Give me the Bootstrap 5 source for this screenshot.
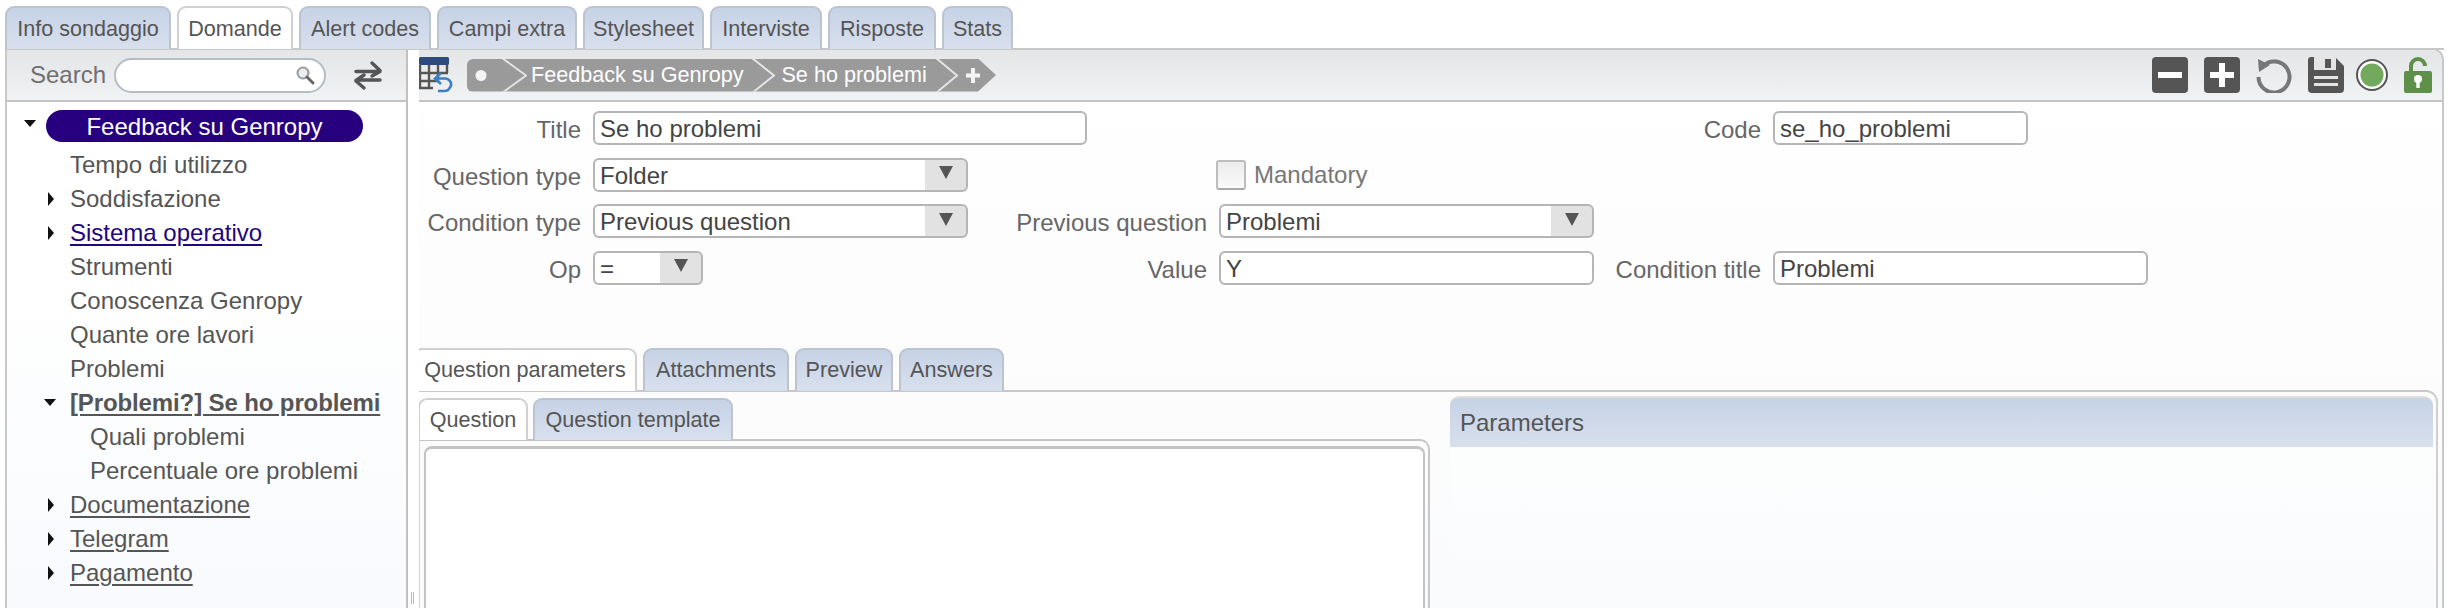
<!DOCTYPE html>
<html lang="it">
<head>
<meta charset="utf-8">
<title>Domande</title>
<link href="https://cdn.jsdelivr.net/npm/bootstrap@5.3.0/dist/css/bootstrap.min.css" rel="stylesheet">
<style>
html,body{height:608px;overflow:hidden;background:#fff;}
body{font-family:"Liberation Sans",Arial,sans-serif;font-size:24px;color:#555;line-height:34px;padding:6px 6px 0 5px;}
.gtabs{display:flex;gap:6px;align-items:flex-end;height:43px;position:relative;z-index:1;}
.gtabs.gsub{height:42px;gap:5px;}
.gtab{font-size:21.6px;line-height:1;padding:0;display:flex;align-items:center;justify-content:center;height:100%;border:2px solid #bcc4d0;border-bottom:0;border-radius:9px 9px 0 0;background:linear-gradient(#c6d2e6,#d8e0ed);color:#555;}
.gtab.on{background:#fff;border-color:#d0d0d0;color:#555;}
.tw-a{width:166px}.tw-b{width:116px}.tw-c{width:132px}.tw-d{width:140px}.tw-e{width:121px}.tw-f{width:112px}.tw-g{width:108px}.tw-h{width:71px}
.tw-i{width:224px}.tw-j{width:146px}.tw-k{width:98px}.tw-l{width:105px}.tw-m{width:110px}.tw-n{width:200px}
.shell{height:560px;display:flex;border-top:2px solid #c8c8c8;margin-top:-1px;}
.leftp{width:403px;flex:none;border-left:2px solid #c8c8c8;border-right:2px solid #c0c0c0;background:linear-gradient(#fff 40%,#f8fafd);}
.splitter{width:11px;flex:none;position:relative;background:#fff;}
.splitter i{position:absolute;left:3px;top:542px;width:3px;height:12px;border-left:1px solid #bbb;border-right:1px solid #bbb;}
.rightp{flex:1;min-width:0;display:flex;flex-direction:column;overflow:hidden;border-right:2px solid #c8c8c8;border-top-right-radius:12px;margin-top:-2px;border-top:2px solid #c8c8c8;background:linear-gradient(#fff,#fcfcfc 60%,#fafbfd);}
.lhead{height:52px;background:linear-gradient(#e3e5e7,#f1f2f3);border-bottom:2px solid #c4c4c4;display:flex;align-items:center;padding-left:23px;color:#707070;}
.searchbox{width:212px;height:35px;margin-left:8px;border:2px solid #b4bcc6;border-radius:18px;background:#fff;display:flex;align-items:center;justify-content:flex-end;padding-right:9px;}
.swapi{margin-left:27px;}
.gtree{list-style:none;margin:0;padding:8px 0 0 0;}
.gtree li{height:34px;line-height:34px;padding-left:63px;position:relative;white-space:nowrap;}
.gtree li.deep{padding-left:83px;}
.gtree li.sub{text-decoration:underline;text-underline-offset:3px;}
.gtree li.visited{color:#22057f;}
.gtree li.bold{font-weight:700;letter-spacing:-.12px;}
.gtree li.rootn{height:32px;line-height:34px;padding:0;margin-left:39px;margin-bottom:6px;width:317px;background:#26007f;color:#fff;border-radius:16px;text-align:center;}
.tarrow-r,.tarrow-d{position:absolute;width:0;height:0;}
.tarrow-r{left:41px;top:10px;border-left:6px solid #111;border-top:7px solid transparent;border-bottom:7px solid transparent;}
.tarrow-d{left:37px;top:13px;border-top:7px solid #111;border-left:6px solid transparent;border-right:6px solid transparent;}
.rootn .tarrow-d{left:-22px;top:10px;}
.rhead{height:52px;flex:none;background:linear-gradient(#e3e5e7,#f1f2f3);border-bottom:2px solid #c4c4c4;display:flex;align-items:center;border-top-right-radius:10px;}
.crumb{margin-left:14px;width:529px;height:33px;background:#9a9a9a;color:#fff;font-size:21.6px;display:flex;align-items:center;border-radius:6px 0 0 6px;clip-path:polygon(0 0,511px 0,529px 50%,511px 100%,0 100%);position:relative;}
.crumb svg{flex:none;}
.crumb span{line-height:1;}
.toolset{margin-left:auto;display:flex;gap:16px;padding-right:10px;}
.toolset svg{display:block;}
.toolset .circ{margin-left:-4px;}
.gform{display:grid;flex:none;grid-template-columns:162px 375px 227px 375px 155px 1fr;column-gap:12px;grid-auto-rows:34px;row-gap:12.6px;padding-top:9px;margin-left:0;}
.glabel{text-align:right;color:#666;line-height:37px;white-space:nowrap;}
.gfield.form-control{height:34px;font-size:24px;line-height:30px;padding:2px 5px 0;color:#444;border:2px solid #b5b5b5;border-radius:6px;background:#fff;}
.gselect{height:34px;flex-wrap:nowrap;}
.gselect .form-control{height:34px;font-size:24px;padding:2px 5px 0;color:#444;border:2px solid #b5b5b5;border-right:0;border-radius:6px 0 0 6px!important;box-shadow:none;}
.gselect .input-group-text{height:34px;width:43px;padding:0;justify-content:center;background:#e2e2e2;border:2px solid #b5b5b5;border-left:0;border-radius:0 6px 6px 0!important;margin-left:0!important;}
.gselect .input-group-text::after{content:"";border-top:13px solid #555;border-left:7px solid transparent;border-right:7px solid transparent;margin-top:-4px;}
.w-a{width:375px;}.w-b{width:110px;}
.w-title{grid-column:2/4;width:494px;}
.w-code{width:255px;}
.w-ctitle{width:375px;}
.gc-1{grid-column:1}.gc-4{grid-column:4}.gc-5{grid-column:5}
.mand{display:flex;align-items:center;gap:8px;color:#777;margin-left:-3px;line-height:37px;}
.mbox{width:30px;height:30px;border:2px solid #bdbdbd;border-bottom-color:#aaa;border-radius:3px;background:linear-gradient(#ececec,#fafafa);}
.lower{margin-top:63px;flex:1;min-height:0;overflow:hidden;}
.t1{margin-left:-6px;}
.lowerbody{border-top:2px solid #c8c8c8;margin-left:-4px;display:flex;height:300px;margin-right:4px;border-right:2px solid #d0d0d0;border-top-right-radius:12px;margin-top:-1px;}
.qcol{width:1015px;flex:none;padding-top:6px;padding-left:3px;}
.qbody{border-top:2px solid #c4c4c4;border-left:2px solid #d4d4d4;border-right:2px solid #c8c8c8;border-top-right-radius:10px;height:200px;padding:5px 3px 0 4px;margin-top:-1px;}
.qedit{height:195px;border:2px solid #c4c4c4;border-bottom:0;border-top-width:3px;border-radius:8px 8px 0 0;background:#fff;}
.pcol{margin-left:20px;width:983px;flex:none;padding-top:4px;}
.phead{height:51px;line-height:50px;padding-left:10px;background:linear-gradient(#c6d2e6,#d8e0ed);border-top:2px solid #dedede;border-radius:9px 9px 0 0;color:#555;}
.pbody{height:200px;background:linear-gradient(#fcfdfd,#f9fafc);}
</style>
</head>
<body>
<nav class="gtabs">
  <div class="gtab tw-a">Info sondaggio</div>
  <div class="gtab on tw-b">Domande</div>
  <div class="gtab tw-c">Alert codes</div>
  <div class="gtab tw-d">Campi extra</div>
  <div class="gtab tw-e">Stylesheet</div>
  <div class="gtab tw-f">Interviste</div>
  <div class="gtab tw-g">Risposte</div>
  <div class="gtab tw-h">Stats</div>
</nav>
<div class="shell">
  <aside class="leftp">
    <div class="lhead">
      <span>Search</span>
      <div class="searchbox">
        <svg width="20" height="20" viewBox="0 0 20 20"><circle cx="8" cy="8" r="5.5" fill="#e8eef2" stroke="#9a9a9a" stroke-width="2"/><path d="M12 12l6 6" stroke="#666" stroke-width="3" stroke-linecap="round"/></svg>
      </div>
      <svg class="swapi" width="30" height="30" viewBox="0 0 30 30"><path d="M3 11.5H26M27 10.5L19 3M27 11.5L19 16" stroke="#555" stroke-width="3.4" fill="none" stroke-linecap="round"/><path d="M27 20H4M3 20.5L11 15M3 21L11 28" stroke="#555" stroke-width="3.4" fill="none" stroke-linecap="round"/></svg>
    </div>
    <ul class="gtree">
      <li class="rootn"><i class="tarrow-d"></i>Feedback su Genropy</li>
      <li>Tempo di utilizzo</li>
      <li><i class="tarrow-r"></i>Soddisfazione</li>
      <li class="sub visited"><i class="tarrow-r"></i>Sistema operativo</li>
      <li>Strumenti</li>
      <li>Conoscenza Genropy</li>
      <li>Quante ore lavori</li>
      <li>Problemi</li>
      <li class="sub bold"><i class="tarrow-d"></i>[Problemi?] Se ho problemi</li>
      <li class="deep">Quali problemi</li>
      <li class="deep">Percentuale ore problemi</li>
      <li class="sub"><i class="tarrow-r"></i>Documentazione</li>
      <li class="sub"><i class="tarrow-r"></i>Telegram</li>
      <li class="sub"><i class="tarrow-r"></i>Pagamento</li>
    </ul>
  </aside>
  <div class="splitter"><i></i></div>
  <main class="rightp">
    <div class="rhead">
      <svg width="34" height="36" viewBox="0 0 34 36" class="flex-none"><rect x="0" y="0" width="30" height="8" rx="1.5" fill="#2c4a7c"/><path d="M1 8V32M10 8V32M19 8V24M28 8V16M0 16H29M0 24H19M0 31H14" stroke="#555" stroke-width="2.4" fill="none"/><path d="M31 30.5a7 6 0 0 0 -4 -9H17" fill="none" stroke="#3b7fc4" stroke-width="2.6"/><path d="M22 16l-6 5.5 6 5.5" fill="none" stroke="#3b7fc4" stroke-width="2.6"/><path d="M31 30a6 5 0 0 1 -6 4h-6" fill="none" stroke="#3b7fc4" stroke-width="2.6"/></svg>
      <div class="crumb">
        <svg width="60" height="33" viewBox="0 0 60 33"><circle cx="14" cy="16.5" r="5.5" fill="#f4f4f4"/><path d="M35 -1L59 16.5 35 34" stroke="#e4e4e4" stroke-width="2" fill="none"/></svg>
        <span class="ms-1">Feedback su Genropy</span>
        <svg class="ms-2" width="26" height="33" viewBox="0 0 26 33"><path d="M1 -1L23 16.5 1 34" stroke="#e4e4e4" stroke-width="2" fill="none"/></svg>
        <span class="ms-1">Se ho problemi</span>
        <svg class="ms-2" width="24" height="33" viewBox="0 0 24 33"><path d="M1 -1L22 16.5 1 34" stroke="#e4e4e4" stroke-width="2" fill="none"/></svg>
        <svg class="ms-1" width="20" height="33" viewBox="0 0 20 33"><path d="M10 9V24M3 16.5H17" stroke="#f4f4f4" stroke-width="4"/></svg>
      </div>
      <div class="toolset">
        <svg width="36" height="36" viewBox="0 0 36 36"><rect width="36" height="36" rx="4" fill="#555"/><rect x="6" y="15" width="24" height="6" fill="#fff"/></svg>
        <svg width="36" height="36" viewBox="0 0 36 36"><rect width="36" height="36" rx="4" fill="#555"/><path d="M6 18H30M18 6V30" stroke="#fff" stroke-width="6"/></svg>
        <svg width="36" height="36" viewBox="0 0 36 36"><path d="M7 9A15.5 15.5 0 1 1 2.5 20" fill="none" stroke="#777" stroke-width="4"/><path d="M2 2L14 8 3 15Z" fill="#777"/></svg>
        <svg width="36" height="36" viewBox="0 0 36 36"><path d="M3 0H27L36 9V32a4 4 0 0 1-4 4H4a4 4 0 0 1-4-4V3a3 3 0 0 1 3-3Z" fill="#555"/><rect x="6" y="0" width="22" height="13" fill="#e4e4e4"/><rect x="17" y="2" width="6" height="9" fill="#555"/><rect x="6" y="19" width="24" height="3" fill="#e4e4e4"/><rect x="6" y="26" width="24" height="3" fill="#e4e4e4"/></svg>
        <svg class="circ" width="32" height="36" viewBox="0 0 32 36"><circle cx="16" cy="18" r="15" fill="#fff" stroke="#555" stroke-width="2"/><circle cx="16" cy="18" r="11.5" fill="#72a95c"/></svg>
        <svg width="28" height="36" viewBox="0 0 28 36"><path d="M7 15V9a7 7 0 0 1 14 0" fill="none" stroke="#5e9049" stroke-width="4"/><rect x="0" y="14" width="28" height="22" rx="2" fill="#5e9049"/><circle cx="14" cy="22" r="4" fill="#fff"/><rect x="12.3" y="23" width="3.4" height="8" fill="#fff"/></svg>
      </div>
    </div>
    <form class="gform">
      <label class="glabel">Title</label>
      <input class="form-control gfield w-title" value="Se ho problemi">
      <label class="glabel gc-5">Code</label>
      <input class="form-control gfield w-code" value="se_ho_problemi">

      <label class="glabel gc-1">Question type</label>
      <div class="input-group gselect w-a"><input class="form-control" value="Folder"><span class="input-group-text"></span></div>
      <div class="mand gc-4"><span class="mbox"></span><span>Mandatory</span></div>

      <label class="glabel gc-1">Condition type</label>
      <div class="input-group gselect w-a"><input class="form-control" value="Previous question"><span class="input-group-text"></span></div>
      <label class="glabel">Previous question</label>
      <div class="input-group gselect w-a"><input class="form-control" value="Problemi"><span class="input-group-text"></span></div>

      <label class="glabel gc-1">Op</label>
      <div class="input-group gselect w-b"><input class="form-control" value="="><span class="input-group-text"></span></div>
      <label class="glabel">Value</label>
      <input class="form-control gfield w-a" value="Y">
      <label class="glabel">Condition title</label>
      <input class="form-control gfield w-ctitle" value="Problemi">
    </form>
    <section class="lower">
      <div class="gtabs t1">
        <div class="gtab on tw-i">Question parameters</div>
        <div class="gtab tw-j">Attachments</div>
        <div class="gtab tw-k">Preview</div>
        <div class="gtab tw-l">Answers</div>
      </div>
      <div class="lowerbody">
        <div class="qcol">
          <div class="gtabs gsub">
            <div class="gtab on tw-m">Question</div>
            <div class="gtab tw-n">Question template</div>
          </div>
          <div class="qbody"><div class="qedit"></div></div>
        </div>
        <div class="pcol">
          <div class="phead">Parameters</div>
          <div class="pbody"></div>
        </div>
      </div>
    </section>
  </main>
</div>
<script src="https://cdn.jsdelivr.net/npm/bootstrap@5.3.0/dist/js/bootstrap.bundle.min.js"></script>
</body>
</html>
